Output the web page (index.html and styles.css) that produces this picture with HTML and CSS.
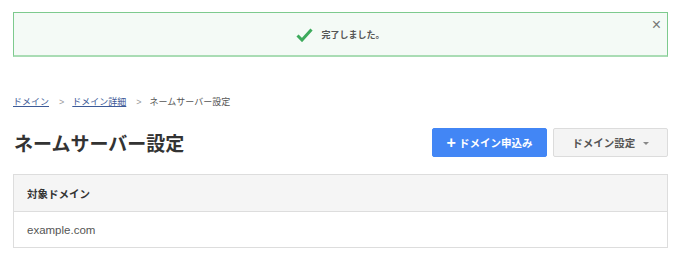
FILE: index.html
```html
<!DOCTYPE html>
<html>
<head>
<meta charset="utf-8">
<link rel="stylesheet" href="styles.css">
</head>
<body>
    <div class="alert">
        <svg class="check" width="17" height="14" viewBox="0 0 17 14">
            <path d="M1.5 7.5 L6 12 L15.5 1.5" fill="none" stroke="#3daa5c" stroke-width="3"/>
        </svg>
        <span>完了しました。</span>
        <button class="close">&times;</button>
    </div>

    <div class="breadcrumb">
        <a href="#">ドメイン</a>
        <span class="sep">&gt;</span>
        <a href="#">ドメイン詳細</a>
        <span class="sep">&gt;</span>
        <span class="current">ネームサーバー設定</span>
    </div>

    <div class="title-row">
        <h1>ネームサーバー設定</h1>
        <div class="actions">
            <button class="btn btn-primary"><span class="plus">+</span>ドメイン申込み</button>
            <button class="btn btn-default">ドメイン設定 <span class="caret"></span></button>
        </div>
    </div>

    <table class="domain-table">
        <tr><th>対象ドメイン</th></tr>
        <tr><td>example.com</td></tr>
    </table>
</body>
</html>
```

FILE: styles.css
```css
body{
    margin: 0;
    padding: 12px 12px 0 13px;
    font-family: "Noto Sans CJK JP", "Liberation Sans", sans-serif;
    color: #333;
    background: #fff;
}

.alert{
    position: relative;
    height: 42px;
    display: flex;
    align-items: center;
    justify-content: center;
    gap: 8px;
    background: #f4faf6;
    border: 1px solid #7dca8e;
    border-bottom: 2px solid #a9dcb4;
    font-size: 9px;
    font-weight: 700;
    color: #555;
}

.check{
    margin-top: 1px;
}

.close{
    position: absolute;
    top: 4px;
    right: 6px;
    border: 0;
    background: none;
    padding: 0;
    font-size: 16px;
    line-height: 16px;
    color: #777;
    font-family: "Liberation Sans", sans-serif;
}

.breadcrumb{
    margin-top: 38px;
    font-size: 9px;
    line-height: 14px;
    color: #555;
    display: flex;
    align-items: center;
}

.breadcrumb a{
    color: #3c5a97;
    text-decoration: underline;
}

.sep{
    color: #999;
    margin: 0 8px 0 10px;
    font-family: "Liberation Sans", sans-serif;
}

.title-row{
    display: flex;
    justify-content: space-between;
    align-items: center;
    margin-top: 19px;
}

h1{
    margin: 0 0 0 1px;
    font-size: 19px;
    font-weight: 700;
    color: #333;
}

.actions{
    display: flex;
    gap: 6px;
}

.btn{
    height: 29px;
    font-family: "Noto Sans CJK JP", "Liberation Sans", sans-serif;
    font-size: 10.5px;
    font-weight: 700;
    border-radius: 2px;
    cursor: pointer;
}

.btn-primary{
    width: 115px;
    background: #4286f5;
    color: #fff;
    border: 1px solid #4286f5;
}

.plus{
    font-family: "Liberation Sans", sans-serif;
    font-size: 16px;
    margin-right: 3px;
    vertical-align: -1px;
}

.btn-default{
    width: 115px;
    background: #f4f4f4;
    color: #555;
    border: 1px solid #dcdcdc;
}

.caret{
    display: inline-block;
    border-top: 3px solid #888;
    border-left: 3px solid transparent;
    border-right: 3px solid transparent;
    margin-left: 5px;
    vertical-align: 2px;
}

.domain-table{
    width: 100%;
    margin-top: 17px;
    border-collapse: collapse;
    border: 1px solid #ddd;
}

th, td{
    text-align: left;
    padding: 0 13px;
    border-bottom: 1px solid #ddd;
}

th{
    height: 36px;
    background: #f5f5f5;
    font-size: 10.5px;
    font-weight: 700;
    color: #333;
}

td{
    height: 35px;
    font-size: 11.5px;
    color: #555;
    font-family: "Liberation Sans", sans-serif;
}
```
